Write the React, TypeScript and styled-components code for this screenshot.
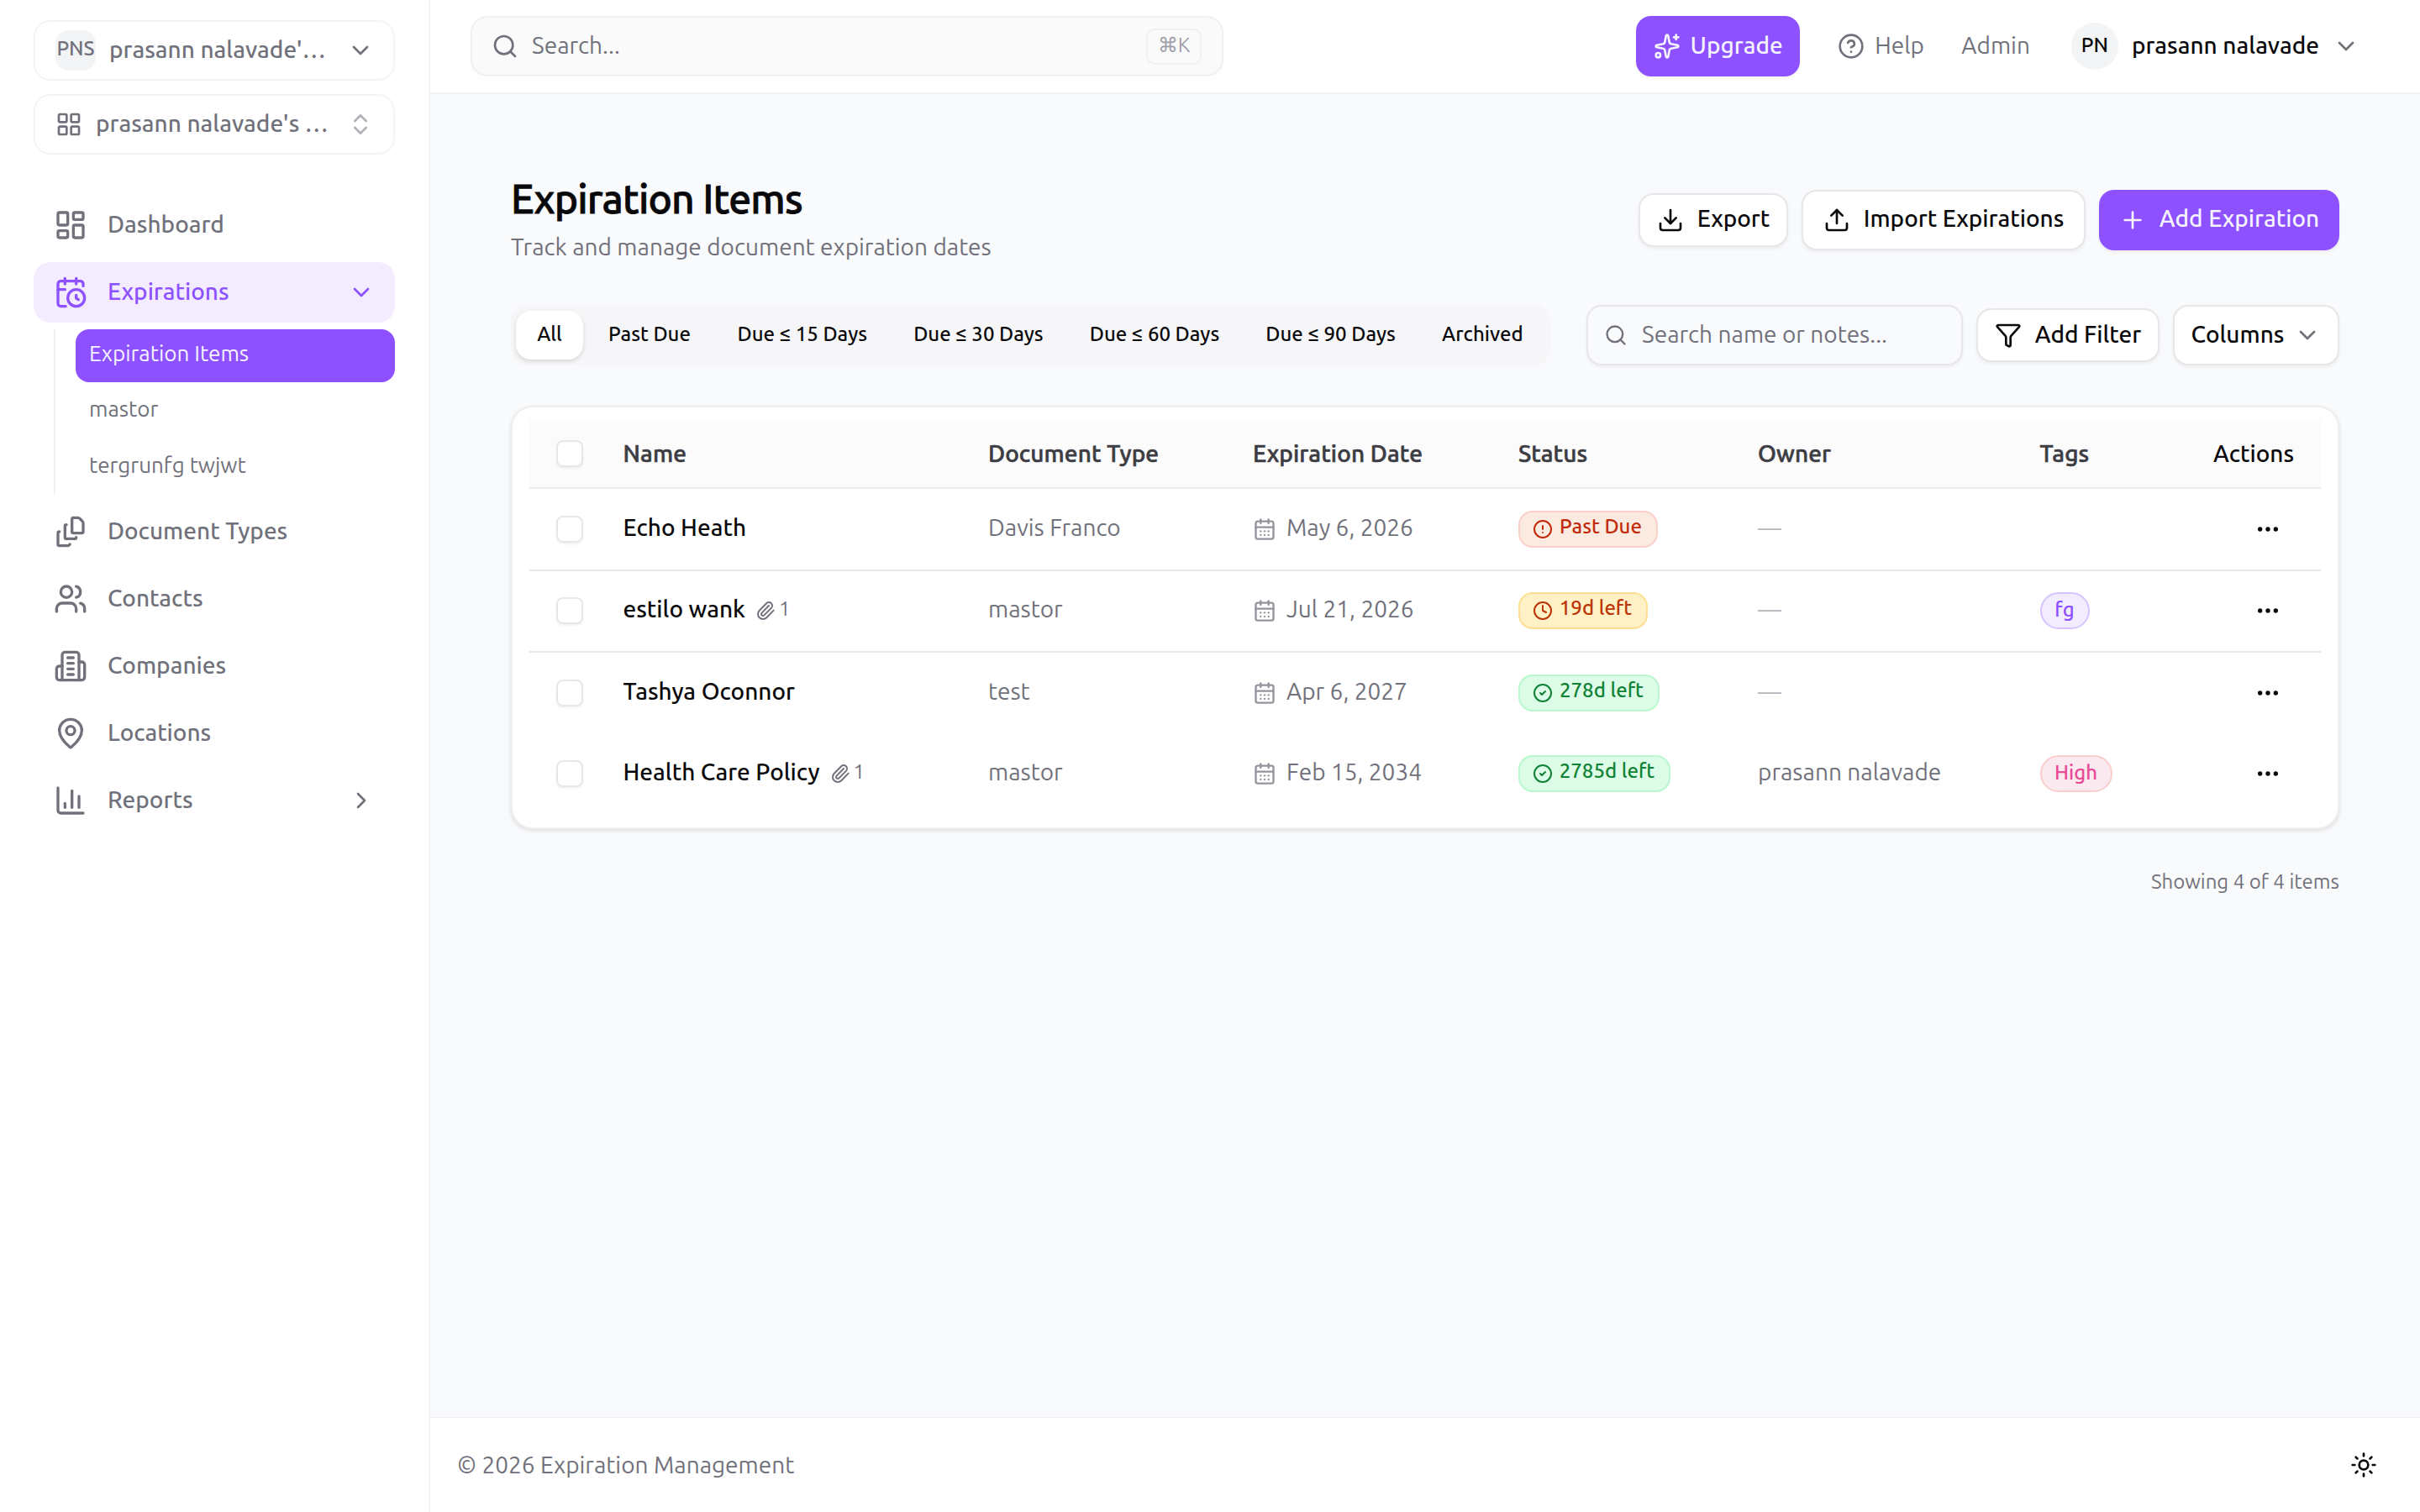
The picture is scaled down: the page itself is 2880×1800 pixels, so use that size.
import { useState } from "react";
import type { ReactNode } from "react";
import styled, { createGlobalStyle, css } from "styled-components";
import {
  CalendarClock,
  CalendarDays,
  ChartColumn,
  ChevronDown,
  ChevronRight,
  ChevronsUpDown,
  CircleAlert,
  CircleCheck,
  CircleQuestionMark,
  Clock,
  Download,
  Ellipsis,
  Funnel,
  LayoutDashboard,
  LayoutGrid,
  MapPin,
  Paperclip,
  Plus,
  Search,
  Sparkles,
  Sun,
  Upload,
  Users,
} from "lucide-react";

const GlobalStyle = createGlobalStyle`
  * {
    box-sizing: border-box;
  }
  body {
    margin: 0;
    background: #ffffff;
    font-family: Ubuntu, "Noto Sans", sans-serif;
    font-size: 28px;
    color: #09090b;
  }
  button {
    font: inherit;
    letter-spacing: inherit;
    color: inherit;
  }
  svg {
    flex: none;
    display: block;
  }
`;

/* labels sit a little above the middle of their box */
const base = css`
  font-size: 28px;
  line-height: 36px;
  padding-bottom: 3px;
  white-space: nowrap;
`;
const small = css`
  font-size: 24px;
  line-height: 32px;
  padding-bottom: 6px;
  white-space: nowrap;
`;
const medium = css`
  font-weight: 500;
`;

const Page = styled.div`
  display: flex;
  width: 2880px;
  height: 1800px;
  overflow: hidden;
`;

/* ---------- sidebar ---------- */
const Sidebar = styled.aside`
  width: 512px;
  flex: none;
  border-right: 2px solid #f4f4f6;
  padding: 24px 40px 0;
  display: flex;
  flex-direction: column;
  color: #71717b;
`;
const Switcher = styled.button`
  display: flex;
  align-items: center;
  gap: 16px;
  width: 430px;
  height: 72px;
  margin-bottom: 16px;
  padding: 0 23px 0 24px;
  border: 2px solid #f4f4f6;
  border-radius: 20px;
  background: #ffffff;
`;
const OrgBadge = styled.span`
  width: 48px;
  height: 48px;
  flex: none;
  display: flex;
  align-items: center;
  justify-content: center;
  border-radius: 16px;
  background: #f3f4f6;
  ${small}
  ${medium}
  padding-bottom: 4px;
`;
const SwitcherName = styled.span`
  ${base}
  ${medium}
  flex: 1;
  text-align: left;
`;
const Nav = styled.nav`
  display: flex;
  flex-direction: column;
  gap: 8px;
  margin-top: 32px;
  width: 430px;
`;
const NavItem = styled.a<{ $active?: boolean }>`
  display: flex;
  align-items: center;
  gap: 24px;
  height: 72px;
  padding: 0 24px;
  border-radius: 20px;
  background: ${(p) => (p.$active ? "#f3ecff" : "transparent")};
  color: ${(p) => (p.$active ? "#8e51ff" : "#71717b")};
`;
const NavLabel = styled.span`
  ${base}
  ${medium}
  flex: 1;
`;
const SubNav = styled.div`
  display: flex;
  flex-direction: column;
  gap: 4px;
  height: 197px;
  margin-left: 24px;
  padding-left: 24px;
  border-left: 2px solid #f1f1f3;
`;
const SubItem = styled.a<{ $active?: boolean }>`
  display: flex;
  align-items: center;
  height: 62.5px;
  padding: 0 16px;
  border-radius: 16px;
  background: ${(p) => (p.$active ? "#8e51ff" : "transparent")};
  color: ${(p) => (p.$active ? "#f5f3ff" : "#71717b")};
`;
const SubLabel = styled.span`
  ${small}
  font-size: 26px;
  padding-bottom: 5px;
`;

/* ---------- shell ---------- */
const Main = styled.main`
  flex: 1;
  display: flex;
  flex-direction: column;
  background: #f9fafc;
`;
const TopBar = styled.header`
  height: 112px;
  flex: none;
  display: flex;
  align-items: center;
  padding: 0 72px 0 48px;
  border-bottom: 2px solid #f4f4f6;
  background: #ffffff;
  color: #71717b;
`;
const GlobalSearch = styled.div`
  display: flex;
  align-items: center;
  gap: 16px;
  width: 896px;
  height: 72px;
  padding: 0 24px 0 23px;
  border: 2px solid #f0f0f1;
  border-radius: 20px;
  background: #fafafa;
`;
const SearchText = styled.span`
  ${base}
  flex: 1;
`;
const Kbd = styled.kbd`
  ${small}
  font-family: inherit;
  width: 66px;
  height: 43px;
  padding: 2px 0 0;
  text-align: center;
  border: 2px solid #f0f0f1;
  border-radius: 10px;
  color: #9f9fa9;
`;
const TopLinks = styled.div`
  display: flex;
  align-items: center;
  margin-left: auto;
`;
const TopLink = styled.a`
  display: flex;
  align-items: center;
  gap: 12.5px;
  margin-left: 44.5px;
`;
const Label = styled.span`
  ${base}
`;
const StrongLabel = styled.span`
  ${base}
  ${medium}
`;
const Avatar = styled.span`
  display: flex;
  align-items: center;
  justify-content: center;
  width: 56px;
  height: 56px;
  margin-left: 49px;
  border-radius: 50%;
  background: #f3f4f6;
  color: #09090b;
  ${small}
  ${medium}
  padding-bottom: 3px;
`;
const UserName = styled.span`
  ${base}
  ${medium}
  margin: 0 16px;
  color: #09090b;
`;

/* ---------- buttons ---------- */
const Button = styled.button<{ $primary?: boolean; $w: number; $h: number; $gap?: number }>`
  display: flex;
  align-items: center;
  justify-content: center;
  gap: ${(p) => p.$gap ?? 16}px;
  width: ${(p) => p.$w}px;
  height: ${(p) => p.$h}px;
  padding: 0;
  flex: none;
  border: ${(p) => (p.$primary ? "none" : "2px solid #e7e7ea")};
  border-radius: 18px;
  background: ${(p) => (p.$primary ? "#8e51ff" : "#ffffff")};
  color: ${(p) => (p.$primary ? "#f5f3ff" : "#09090b")};
  box-shadow: 0 2px 4px rgba(0, 0, 0, 0.06);
`;

/* ---------- content ---------- */
const Content = styled.section`
  flex: 1;
  padding: 96px 96px 0;
`;
const TitleRow = styled.div`
  display: flex;
  align-items: center;
  justify-content: space-between;
  height: 107px;
`;
const Title = styled.h1`
  margin: 0;
  font-size: 48px;
  line-height: 56px;
  font-weight: 500;
  letter-spacing: -0.83px;
  -webkit-text-stroke: 0.8px currentColor;
`;
const Subtitle = styled.p`
  ${base}
  margin: 12px 0 0;
  color: #71717b;
`;
const Group = styled.div`
  display: flex;
  align-items: center;
  gap: 16px;
`;
const Toolbar = styled.div`
  display: flex;
  align-items: center;
  justify-content: space-between;
  margin-top: 48px;
`;
const Tabs = styled.div`
  display: flex;
  align-items: center;
  gap: 4px;
  height: 72px;
  padding: 0 7px 0 6px;
  border-radius: 20px;
  background: #f6f6f8;
`;
const Tab = styled.button<{ $w: number; $active: boolean }>`
  display: flex;
  justify-content: center;
  align-items: center;
  width: ${(p) => p.$w}px;
  height: 58px;
  padding: 0;
  border: none;
  border-radius: 18px;
  background: ${(p) => (p.$active ? "#ffffff" : "transparent")};
  box-shadow: ${(p) => (p.$active ? "0 2px 5px rgba(0, 0, 0, 0.14)" : "none")};
`;
const TabLabel = styled.span`
  ${small}
  ${medium}
  padding-bottom: 3px;
`;
const ListSearch = styled.div`
  display: flex;
  align-items: center;
  gap: 17px;
  width: 448px;
  height: 72px;
  padding-left: 19px;
  border: 2px solid #e7e7ea;
  border-radius: 18px;
  color: #71717b;
  box-shadow: 0 2px 4px rgba(0, 0, 0, 0.05);
`;

/* ---------- table ---------- */
const Card = styled.div`
  margin-top: 48px;
  height: 504px;
  padding: 15px 20px 0;
  border: 2px solid #efeff1;
  border-radius: 26px;
  background: #ffffff;
  box-shadow: 0 2px 5px rgba(0, 0, 0, 0.12);
`;
const row = css`
  display: grid;
  grid-template-columns: 80px 450px 315px 316px 285px 335.5px 206.5px 1fr;
  align-items: center;
`;
const HeadRow = styled.div`
  ${row}
  height: 82px;
  background: #fbfbfb;
  border-bottom: 2px solid #ededef;
`;
const Row = styled.div<{ $line: boolean }>`
  ${row}
  height: ${(p) => (p.$line ? 97.5 : 96)}px;
  border-bottom: ${(p) => (p.$line ? "2px solid #e7e7ea" : "none")};
`;
const Cell = styled.div<{ $pad?: number }>`
  display: flex;
  align-items: center;
  padding-left: ${(p) => p.$pad ?? 16}px;
  color: #71717b;
`;
const HeadLabel = styled.span`
  ${base}
  ${medium}
  padding-bottom: 1px;
  letter-spacing: 0.12px;
  color: #3c3c43;
  -webkit-text-stroke: 0.6px currentColor;
`;
const ActionsLabel = styled.span`
  ${base}
  ${medium}
  padding-bottom: 1px;
  color: #09090b;
`;
const CellText = styled.span`
  ${base}
  padding-bottom: 4px;
`;
const NameLabel = styled(CellText)`
  ${medium}
  color: #09090b;
`;
const Checkbox = styled.span`
  width: 32px;
  height: 32px;
  border: 2px solid #e7e7ea;
  border-radius: 8px;
  background: #ffffff;
  box-shadow: 0 2px 3px rgba(0, 0, 0, 0.05);
`;
const Files = styled.span`
  display: flex;
  align-items: center;
  gap: 4px;
  margin-left: 12px;
`;
const FileCount = styled.span`
  ${small}
  padding-bottom: 4px;
`;
const DateIcon = styled.span`
  margin-right: 12px;
  opacity: 0.75;
`;
const Dash = styled(CellText)`
  color: #b4b4bb;
`;
const tones = {
  red: ["#fbeadf", "#fad0c9", "#c12a0c"],
  amber: ["#fef1c5", "#fddf94", "#bb3507"],
  green: ["#dcfce7", "#b9f8cf", "#108236"],
  violet: ["#f2ecff", "#d6c3ff", "#8e51ff"],
  pink: ["#fae9ef", "#f9cdcb", "#e84a95"],
};
type Tone = keyof typeof tones;
const Badge = styled.span<{ $tone: Tone; $w: number; $pill?: boolean }>`
  display: flex;
  align-items: center;
  justify-content: center;
  gap: 8px;
  width: ${(p) => p.$w}px;
  height: 44px;
  padding-right: ${(p) => (p.$pill ? 0 : 2)}px;
  border-radius: ${(p) => (p.$pill ? 22 : 17)}px;
  background: ${(p) => tones[p.$tone][0]};
  border: 2px solid ${(p) => tones[p.$tone][1]};
  color: ${(p) => tones[p.$tone][2]};
`;
const BadgeLabel = styled.span`
  ${small}
  ${medium}
`;
const TagLabel = styled.span`
  ${small}
  ${medium}
  padding-bottom: 3px;
`;
const MoreButton = styled.button`
  display: flex;
  margin-left: 49px;
  padding: 0;
  border: none;
  background: none;
  color: #09090b;
`;
const Showing = styled.p`
  ${small}
  margin: 47px 0 0;
  text-align: right;
  color: #71717b;
`;
const Footer = styled.footer`
  display: flex;
  align-items: center;
  justify-content: space-between;
  height: 113px;
  padding: 0 51px 0 32px;
  border-top: 1px solid #f0f0f2;
  background: #ffffff;
  color: #71717b;
`;
const Copyright = styled.span`
  ${base}
  padding-bottom: 1px;
`;
const ThemeToggle = styled.span`
  color: #09090b;
`;

const tabs: [string, number][] = [
  ["All", 80],
  ["Past Due", 150],
  ["Due ≤ 15 Days", 205.6],
  ["Due ≤ 30 Days", 205.6],
  ["Due ≤ 60 Days", 205.6],
  ["Due ≤ 90 Days", 205.6],
  ["Archived", 148],
];

interface Item {
  name: string;
  files?: number;
  type: string;
  date: string;
  status: string;
  tone: Tone;
  width: number;
  owner?: string;
  tag?: { label: string; tone: Tone; width: number };
}

const items: Item[] = [
  { name: "Echo Heath", type: "Davis Franco", date: "May 6, 2026", status: "Past Due", tone: "red", width: 166 },
  {
    name: "estilo wank",
    files: 1,
    type: "mastor",
    date: "Jul 21, 2026",
    status: "19d left",
    tone: "amber",
    width: 154,
    tag: { label: "fg", tone: "violet", width: 59 },
  },
  { name: "Tashya Oconnor", type: "test", date: "Apr 6, 2027", status: "278d left", tone: "green", width: 168 },
  {
    name: "Health Care Policy",
    files: 1,
    type: "mastor",
    date: "Feb 15, 2034",
    status: "2785d left",
    tone: "green",
    width: 181,
    owner: "prasann nalavade",
    tag: { label: "High", tone: "pink", width: 86 },
  },
];

const statusIcons: Partial<Record<Tone, ReactNode>> = {
  red: <CircleAlert size={24} />,
  amber: <Clock size={24} />,
  green: <CircleCheck size={24} />,
};

/* three stacked sheets, the front one with a folded corner */
const FilesIcon = () => (
  <svg
    width="40"
    height="40"
    viewBox="0 0 24 24"
    fill="none"
    stroke="currentColor"
    strokeWidth="2"
    strokeLinecap="round"
    strokeLinejoin="round"
  >
    <path d="M21 6v6a1 1 0 0 1-1 1h-6a1 1 0 0 1-1-1V3a1 1 0 0 1 1-1h3.200a2 2 0 0 1 1.400.6l1.800 1.900A2 2 0 0 1 21 6z" />
    <path d="M9 7a1 1 0 0 0-1 1v8a1 1 0 0 0 1 1h6a1 1 0 0 0 1-1" />
    <path d="M4 12a1 1 0 0 0-1 1v8a1 1 0 0 0 1 1h6a2 2 0 0 0 1.500-1" />
  </svg>
);

const OfficeIcon = () => (
  <svg
    width="40"
    height="40"
    viewBox="0 0 24 24"
    fill="none"
    stroke="currentColor"
    strokeWidth="2"
    strokeLinecap="round"
    strokeLinejoin="round"
  >
    <path d="M6 22V4a2 2 0 0 1 2-2h8a2 2 0 0 1 2 2v18Z" />
    <path d="M6 12H4a2 2 0 0 0-2 2v6a2 2 0 0 0 2 2h2" />
    <path d="M18 9h2a2 2 0 0 1 2 2v9a2 2 0 0 1-2 2h-2" />
    <path d="M10 6h4M10 10h4M10 14h4M10 18h4" />
  </svg>
);

function App() {
  const [tab, setTab] = useState("All");

  return (
    <>
      <GlobalStyle />
      <Page>
        <Sidebar>
          <Switcher>
            <OrgBadge>PNS</OrgBadge>
            <SwitcherName>prasann nalavade'…</SwitcherName>
            <ChevronDown size={32} />
          </Switcher>
          <Switcher>
            <LayoutGrid size={32} />
            <SwitcherName>prasann nalavade's …</SwitcherName>
            <ChevronsUpDown size={32} opacity={0.55} />
          </Switcher>
          <Nav>
            <NavItem>
              <LayoutDashboard size={40} />
              <NavLabel>Dashboard</NavLabel>
            </NavItem>
            <NavItem $active>
              <CalendarClock size={40} />
              <NavLabel>Expirations</NavLabel>
              <ChevronDown size={32} />
            </NavItem>
            <SubNav>
              <SubItem $active>
                <SubLabel>Expiration Items</SubLabel>
              </SubItem>
              <SubItem>
                <SubLabel>mastor</SubLabel>
              </SubItem>
              <SubItem>
                <SubLabel>tergrunfg twjwt</SubLabel>
              </SubItem>
            </SubNav>
            <NavItem>
              <FilesIcon />
              <NavLabel>Document Types</NavLabel>
            </NavItem>
            <NavItem>
              <Users size={40} />
              <NavLabel>Contacts</NavLabel>
            </NavItem>
            <NavItem>
              <OfficeIcon />
              <NavLabel>Companies</NavLabel>
            </NavItem>
            <NavItem>
              <MapPin size={40} />
              <NavLabel>Locations</NavLabel>
            </NavItem>
            <NavItem>
              <ChartColumn size={40} />
              <NavLabel>Reports</NavLabel>
              <ChevronRight size={32} />
            </NavItem>
          </Nav>
        </Sidebar>

        <Main>
          <TopBar>
            <GlobalSearch>
              <Search size={32} />
              <SearchText>Search...</SearchText>
              <Kbd>⌘K</Kbd>
            </GlobalSearch>
            <TopLinks>
              <Button $primary $w={195} $h={72} $gap={12}>
                <Sparkles size={32} />
                <StrongLabel>Upgrade</StrongLabel>
              </Button>
              <TopLink>
                <CircleQuestionMark size={32} />
                <Label>Help</Label>
              </TopLink>
              <TopLink>
                <Label>Admin</Label>
              </TopLink>
              <Avatar>PN</Avatar>
              <UserName>prasann nalavade</UserName>
              <ChevronDown size={32} />
            </TopLinks>
          </TopBar>

          <Content>
            <TitleRow>
              <div>
                <Title>Expiration Items</Title>
                <Subtitle>Track and manage document expiration dates</Subtitle>
              </div>
              <Group>
                <Button $w={178} $h={64}>
                  <Download size={32} />
                  <StrongLabel>Export</StrongLabel>
                </Button>
                <Button $w={338} $h={72}>
                  <Upload size={32} />
                  <StrongLabel>Import Expirations</StrongLabel>
                </Button>
                <Button $primary $w={286} $h={72}>
                  <Plus size={32} />
                  <StrongLabel>Add Expiration</StrongLabel>
                </Button>
              </Group>
            </TitleRow>

            <Toolbar>
              <Tabs>
                {tabs.map(([label, width]) => (
                  <Tab key={label} $w={width} $active={tab === label} onClick={() => setTab(label)}>
                    <TabLabel>{label}</TabLabel>
                  </Tab>
                ))}
              </Tabs>
              <Group>
                <ListSearch>
                  <Search size={28} />
                  <Label>Search name or notes...</Label>
                </ListSearch>
                <Button $w={218} $h={64}>
                  <Funnel size={32} />
                  <StrongLabel>Add Filter</StrongLabel>
                </Button>
                <Button $w={198} $h={72} $gap={12}>
                  <StrongLabel>Columns</StrongLabel>
                  <ChevronDown size={32} color="#71717b" />
                </Button>
              </Group>
            </Toolbar>

            <Card>
              <HeadRow>
                <Cell $pad={32}>
                  <Checkbox />
                </Cell>
                <Cell $pad={31.5}>
                  <HeadLabel>Name</HeadLabel>
                </Cell>
                <Cell>
                  <HeadLabel>Document Type</HeadLabel>
                </Cell>
                <Cell>
                  <HeadLabel>Expiration Date</HeadLabel>
                </Cell>
                <Cell>
                  <HeadLabel>Status</HeadLabel>
                </Cell>
                <Cell>
                  <HeadLabel>Owner</HeadLabel>
                </Cell>
                <Cell>
                  <HeadLabel>Tags</HeadLabel>
                </Cell>
                <Cell>
                  <ActionsLabel>Actions</ActionsLabel>
                </Cell>
              </HeadRow>
              {items.map((item, i) => (
                <Row key={item.name} $line={i < 2}>
                  <Cell $pad={32}>
                    <Checkbox />
                  </Cell>
                  <Cell $pad={31.5}>
                    <NameLabel>{item.name}</NameLabel>
                    {item.files ? (
                      <Files>
                        <Paperclip size={24} />
                        <FileCount>{item.files}</FileCount>
                      </Files>
                    ) : null}
                  </Cell>
                  <Cell>
                    <CellText>{item.type}</CellText>
                  </Cell>
                  <Cell>
                    <DateIcon>
                      <CalendarDays size={28} />
                    </DateIcon>
                    <CellText>{item.date}</CellText>
                  </Cell>
                  <Cell>
                    <Badge $tone={item.tone} $w={item.width}>
                      {statusIcons[item.tone]}
                      <BadgeLabel>{item.status}</BadgeLabel>
                    </Badge>
                  </Cell>
                  <Cell>{item.owner ? <CellText>{item.owner}</CellText> : <Dash>—</Dash>}</Cell>
                  <Cell>
                    {item.tag ? (
                      <Badge $tone={item.tag.tone} $w={item.tag.width} $pill>
                        <TagLabel>{item.tag.label}</TagLabel>
                      </Badge>
                    ) : null}
                  </Cell>
                  <Cell>
                    <MoreButton>
                      <Ellipsis size={32} />
                    </MoreButton>
                  </Cell>
                </Row>
              ))}
            </Card>
            <Showing>Showing 4 of 4 items</Showing>
          </Content>

          <Footer>
            <Copyright>© 2026 Expiration Management</Copyright>
            <ThemeToggle>
              <Sun size={32} />
            </ThemeToggle>
          </Footer>
        </Main>
      </Page>
    </>
  );
}

export default App;
